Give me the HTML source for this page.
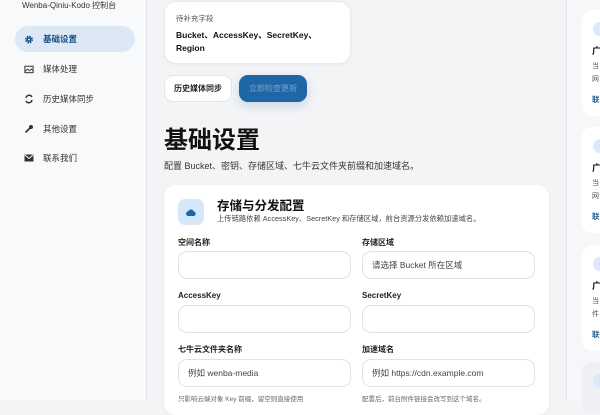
<!DOCTYPE html>
<html><head><meta charset="utf-8"><style>
*{box-sizing:border-box;margin:0;padding:0}
body{width:600px;height:400px;overflow:hidden;background:#f3f4f6;font-family:"Liberation Sans","Noto Sans CJK SC",sans-serif;color:#111;position:relative}
.side{position:absolute;left:0;top:0;width:147px;height:400px;background:#f8f9fa;border-right:1px solid #e4e6ea}
.brand{position:absolute;left:22px;top:0;font-size:8px;color:#333}
.nav{position:absolute;left:15px;width:120px;height:26px;border-radius:13px;display:flex;align-items:center;font-size:8.5px;color:#333}
.nav.on{background:#dce8f6;color:#1a4f86;font-weight:bold}
.nav .ic{width:10px;height:10px;margin-left:9px;margin-right:9px;display:flex;align-items:center;justify-content:center}
.card{position:absolute;background:#fff;border-radius:12px;box-shadow:0 1px 4px rgba(0,0,0,.04)}
.btn{position:absolute;height:27px;border-radius:9px;font-size:8px;display:flex;align-items:center;justify-content:center;font-weight:bold}
.lbl{position:absolute;font-size:8px;font-weight:bold;color:#222}
.inp{position:absolute;width:173px;height:28px;border:1px solid #dfe2e6;border-radius:9px;background:#fff;font-size:8.5px;color:#444;padding-left:9px;display:flex;align-items:center}
.rp{position:absolute;left:566px;top:0;width:34px;height:400px;background:#f6f7f9;border-left:1px solid #e2e4e8}
.rc{position:absolute;left:15px;width:40px;background:#fff;border-radius:10px}
.rc .d{position:absolute;left:11px;top:12px;width:14px;height:14px;border-radius:7px;background:#dde8fb}
.rc .t{position:absolute;left:10px;top:34px;font-size:9px;font-weight:bold}
.rc .s{position:absolute;left:10px;top:50px;font-size:7px;color:#555;line-height:13px}
.rc .l{position:absolute;left:10px;top:84px;font-size:7.5px;color:#1d5b94;font-weight:bold}
</style></head><body>
<div class="side">
<div class="brand">Wenba-Qiniu-Kodo 控制台</div>
<div class="nav on" style="top:26px"><span class="ic"><svg width="11" height="11" viewBox="0 0 12 12"><circle cx="6" cy="6" r="3.6" fill="none" stroke="#1a4f86" stroke-width="2.4" stroke-dasharray="1.6 1.2"/><circle cx="6" cy="6" r="3" fill="#1a4f86"/><circle cx="6" cy="6" r="1.2" fill="#dce8f6"/></svg></span>基础设置</div>
<div class="nav" style="top:56px"><span class="ic"><svg width="11" height="10" viewBox="0 0 11 10"><rect x="1" y="2" width="9" height="7" fill="none" stroke="#444" stroke-width="1.2"/><path d="M1 8l3-3 2 2 2-2 2 2" stroke="#444" fill="none"/></svg></span>媒体处理</div>
<div class="nav" style="top:86px"><span class="ic"><svg width="10" height="10" viewBox="0 0 10 10"><path d="M2 4a3.2 3.2 0 0 1 6-1M8 6a3.2 3.2 0 0 1-6 1" stroke="#333" stroke-width="1.4" fill="none"/></svg></span>历史媒体同步</div>
<div class="nav" style="top:116px"><span class="ic"><svg width="10" height="10" viewBox="0 0 10 10"><path d="M1.5 8.5l4.5-4.5" stroke="#333" stroke-width="1.6"/><circle cx="7" cy="3" r="2" fill="#333"/></svg></span>其他设置</div>
<div class="nav" style="top:145px"><span class="ic"><svg width="10" height="8" viewBox="0 0 10 8"><rect x=".5" y=".5" width="9" height="7" fill="#333"/><path d="M1 1l4 3.5 4-3.5" stroke="#fff" fill="none"/></svg></span>联系我们</div>
</div>
<div class="card" style="left:164px;top:1px;width:187px;height:63px;border:1px solid #e8eaed">
<div style="position:absolute;left:11px;top:11px;font-size:7.5px;color:#555">待补充字段</div>
<div style="position:absolute;left:11px;top:27px;font-size:8.5px;font-weight:bold;line-height:13px">Bucket、AccessKey、SecretKey、<br>Region</div>
</div>
<div class="btn" style="left:164px;top:75px;width:68px;background:#fff;border:1px solid #e3e5e8;color:#222">历史媒体同步</div>
<div class="btn" style="left:239px;top:75px;width:68px;background:#1f66a6;color:#5f8fc2;box-shadow:0 4px 10px rgba(31,102,166,.2)">立即检查更新</div>
<div style="position:absolute;left:164px;top:120px;font-size:24px;font-weight:bold">基础设置</div>
<div style="position:absolute;left:164px;top:159px;font-size:9px;color:#333">配置 Bucket、密钥、存储区域、七牛云文件夹前缀和加速域名。</div>
<div class="card" style="left:164px;top:185px;width:385px;height:230px">
<div style="position:absolute;left:14px;top:14px;width:26px;height:26px;border-radius:7px;background:#d6e7fb;display:flex;align-items:center;justify-content:center"><svg width="10" height="7" viewBox="0 0 10 7"><path d="M2.5 7a2.3 2.3 0 0 1-.3-4.6A3 3 0 0 1 7.8 2.5 2.3 2.3 0 0 1 7.8 7z" fill="#1f66a6"/></svg></div>
<div style="position:absolute;left:53px;top:10px;font-size:12.5px;font-weight:bold">存储与分发配置</div>
<div style="position:absolute;left:53px;top:29px;font-size:7.3px;color:#444">上传链路依赖 AccessKey、SecretKey 和存储区域，前台资源分发依赖加速域名。</div>
<div class="lbl" style="left:14px;top:52px">空间名称</div>
<div class="lbl" style="left:198px;top:52px">存储区域</div>
<div class="inp" style="left:14px;top:66px"></div>
<div class="inp" style="left:198px;top:66px">请选择 Bucket 所在区域</div>
<div class="lbl" style="left:14px;top:106px">AccessKey</div>
<div class="lbl" style="left:198px;top:106px">SecretKey</div>
<div class="inp" style="left:14px;top:120px"></div>
<div class="inp" style="left:198px;top:120px"></div>
<div class="lbl" style="left:14px;top:159px">七牛云文件夹名称</div>
<div class="lbl" style="left:198px;top:159px">加速域名</div>
<div class="inp" style="left:14px;top:174px">例如 wenba-media</div>
<div class="inp" style="left:198px;top:174px">例如 https://cdn.example.com</div>
<div style="position:absolute;left:14px;top:208px;font-size:6.5px;color:#666">只影响云端对象 Key 前缀，留空则直接使用</div>
<div style="position:absolute;left:198px;top:208px;font-size:6.5px;color:#666">配置后，前台附件链接会改写到这个域名。</div>
</div>
<div class="rp">
<div class="rc" style="top:10px;height:106px"><div class="d"></div><div class="t">广</div><div class="s">当<br>网</div><div class="l">联</div></div>
<div class="rc" style="top:127px;height:106px"><div class="d"></div><div class="t">广</div><div class="s">当<br>网</div><div class="l">联</div></div>
<div class="rc" style="top:245px;height:106px"><div class="d"></div><div class="t">广</div><div class="s">当<br>件</div><div class="l">联</div></div>
<div class="rc" style="top:362px;height:50px;background:#eef0f3"><div class="d"></div></div>
</div>
</body></html>
